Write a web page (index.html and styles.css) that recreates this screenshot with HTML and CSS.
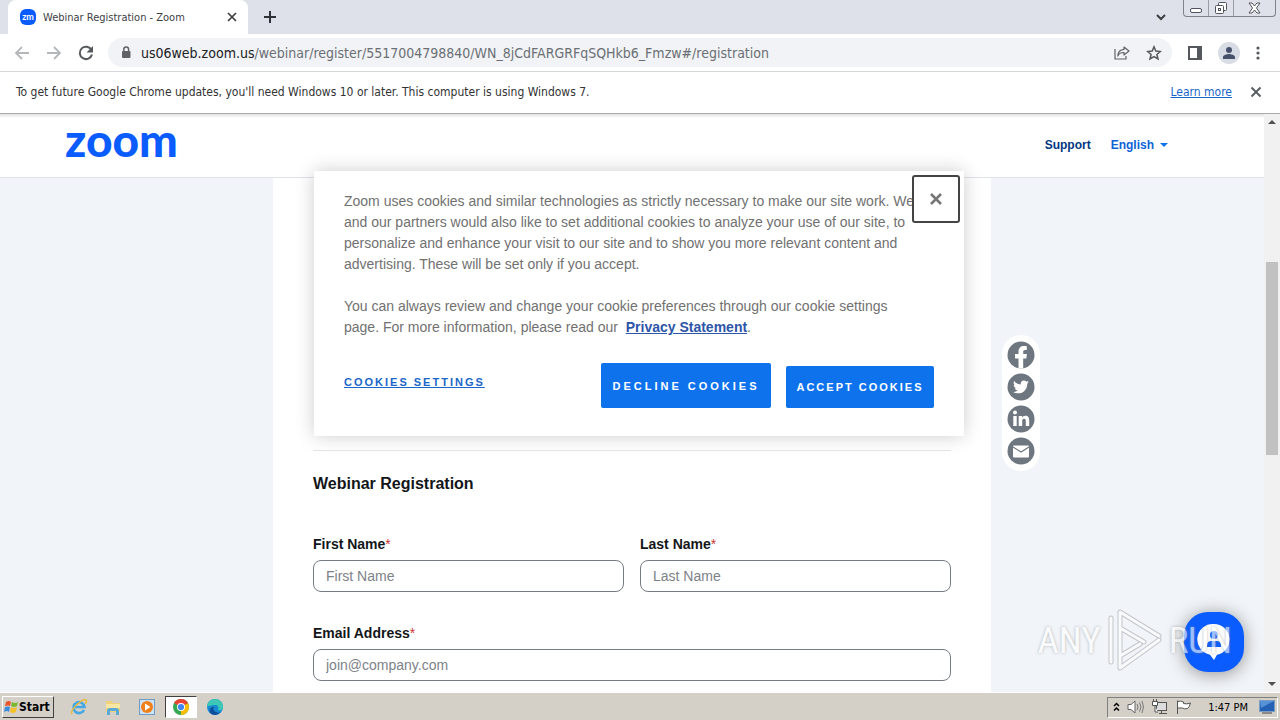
FILE: index.html
```html
<!DOCTYPE html>
<html lang="en">
<head>
  <meta charset="UTF-8">
  <meta name="viewport" content="width=device-width, initial-scale=1.0">
  <title>Webinar Registration - Zoom</title>
  <link rel="stylesheet" href="styles.css">
</head>
<body>

<!-- browser tabs -->
<div class="tab-strip">
  <div class="tab">
    <span class="favicon">zm</span>
    <span class="tab-title">Webinar Registration - Zoom</span>
    <button class="icon-btn" aria-label="Close tab">
      <svg width="10" height="10" viewBox="0 0 10 10"><path d="M1 1l8 8M9 1l-8 8" stroke="#3c4043" stroke-width="1.7"/></svg>
    </button>
  </div>
  <button class="icon-btn new-tab" aria-label="New tab">
    <svg width="12" height="12" viewBox="0 0 12 12"><path d="M6 0v12M0 6h12" stroke="#2f3237" stroke-width="2"/></svg>
  </button>
  <button class="icon-btn tab-search" aria-label="Search tabs">
    <svg width="10" height="7" viewBox="0 0 10 7"><path d="M1 1l4 4 4-4" fill="none" stroke="#3c4043" stroke-width="2"/></svg>
  </button>
  <div class="window-controls">
    <button aria-label="Minimize"><svg width="12" height="14" viewBox="0 0 12 14"><rect x=".5" y="7.500" width="11" height="4" rx="1.500" fill="#fff" stroke="#4f535c"/></svg></button>
    <button aria-label="Restore"><svg width="14" height="14" viewBox="0 0 14 14"><rect x="4.500" y="1.500" width="8" height="8" rx="1" fill="#fff" stroke="#4f535c"/><rect x="1.500" y="4.500" width="8" height="8" rx="1" fill="#fff" stroke="#4f535c"/><rect x="4.500" y="7.500" width="2" height="2" fill="#fff" stroke="#4f535c"/></svg></button>
    <button class="win-close" aria-label="Close"><svg width="13" height="12" viewBox="0 0 13 12"><path d="M1 1h3l2.500 3L9 1h3L8.500 6l3.500 5H9L6.500 8 4 11H1l3.500-5z" fill="#fff" stroke="#4f535c"/></svg></button>
  </div>
</div>

<div class="toolbar">
  <button class="icon-btn" aria-label="Back">
    <svg width="16" height="14" viewBox="0 0 16 14"><path d="M15 7H2M8 1L2 7l6 6" fill="none" stroke="#b5b8bb" stroke-width="1.800"/></svg>
  </button>
  <button class="icon-btn" aria-label="Forward">
    <svg width="16" height="14" viewBox="0 0 16 14"><path d="M1 7h13M8 1l6 6-6 6" fill="none" stroke="#b5b8bb" stroke-width="1.800"/></svg>
  </button>
  <button class="icon-btn" aria-label="Reload">
    <svg width="16" height="16" viewBox="0 0 16 16"><path d="M13.500 5A6.200 6.200 0 1 0 14 9.500" fill="none" stroke="#55585c" stroke-width="2"/><path d="M15 1v6.500H8.500z" fill="#55585c"/></svg>
  </button>
  <div class="address-bar">
    <svg width="10" height="13" viewBox="0 0 10 13"><rect x="1" y="5" width="8.500" height="7" rx="1" fill="#5f6368"/><path d="M2.800 6V3.300a2.400 2.400 0 0 1 4.800 0V6" fill="none" stroke="#5f6368" stroke-width="1.500"/></svg>
    <span class="url"><b>us06web.zoom.us</b>/webinar/register/5517004798840/WN_8jCdFARGRFqSQHkb6_Fmzw#/registration</span>
    <button class="icon-btn" aria-label="Share">
      <svg width="16" height="14" viewBox="0 0 16 14"><path d="M1 3v10h11v-3" fill="none" stroke="#5f6368" stroke-width="1.200"/><path d="M10 1l5 4-5 4V6.500C7 6.300 5 7.500 3.800 10 4 6 6.500 3.700 10 3.400z" fill="none" stroke="#5f6368" stroke-width="1.200" stroke-linejoin="round"/></svg>
    </button>
    <button class="icon-btn" aria-label="Bookmark">
      <svg width="16" height="16" viewBox="0 0 16 16"><path d="M8 1.800l1.800 4.300 4.600.4-3.500 3 1.100 4.500L8 11.600 4 14l1.100-4.500-3.500-3 4.600-.4z" fill="none" stroke="#55585c" stroke-width="1.500"/></svg>
    </button>
  </div>
  <button class="icon-btn" aria-label="Side panel">
    <svg width="14" height="14" viewBox="0 0 14 14"><rect x="1" y="1" width="12" height="12" fill="#fff" stroke="#55585c" stroke-width="2"/><path d="M9 1h4v12H9z" fill="#55585c"/></svg>
  </button>
  <button class="icon-btn" aria-label="Profile">
    <svg width="22" height="22" viewBox="0 0 22 22"><circle cx="11" cy="11" r="11" fill="#d8dce4"/><circle cx="11" cy="8" r="3" fill="#47516b"/><path d="M5 17v-2c0-2 4-3 6-3s6 1 6 3v2z" fill="#47516b"/></svg>
  </button>
  <button class="icon-btn" aria-label="Menu">
    <svg width="4" height="14" viewBox="0 0 4 14" fill="#55585c"><circle cx="2" cy="2" r="1.600"/><circle cx="2" cy="7" r="1.600"/><circle cx="2" cy="12" r="1.600"/></svg>
  </button>
</div>

<div class="infobar">
  <span>To get future Google Chrome updates, you'll need Windows 10 or later. This computer is using Windows 7.</span>
  <a href="#">Learn more</a>
  <button class="icon-btn" aria-label="Dismiss">
    <svg width="12" height="12" viewBox="0 0 12 12"><path d="M1.500 1.500l9 9M10.500 1.500l-9 9" stroke="#55585c" stroke-width="1.800"/></svg>
  </button>
</div>

<div class="viewport">
  <div class="page">
    <header class="site-header">
      <a class="logo" href="#">zoom</a>
      <nav>
        <a class="support" href="#">Support</a>
        <a class="language" href="#">English</a>
      </nav>
    </header>

    <main class="content">
      <form class="card">
        <h2>Webinar Registration</h2>
        <div class="fields">
          <div class="field">
            <label for="first-name">First Name<span>*</span></label>
            <input type="text" id="first-name" placeholder="First Name">
          </div>
          <div class="field">
            <label for="last-name">Last Name<span>*</span></label>
            <input type="text" id="last-name" placeholder="Last Name">
          </div>
          <div class="field wide">
            <label for="email">Email Address<span>*</span></label>
            <input type="email" id="email" placeholder="join@company.com">
          </div>
        </div>
      </form>
    </main>
  </div>

  <div class="scrollbar">
    <span class="arrow up"></span>
    <span class="thumb"></span>
    <span class="arrow down"></span>
  </div>

  <div class="social">
    <a href="#" aria-label="Facebook"><svg width="28" height="28" viewBox="0 0 28 28"><circle cx="14" cy="14" r="13.500" fill="#6e7680"/><path d="M11.500 27.500V17.500H8v-4.500h3.500v-2.500C11.500 7 13.800 5 17 5c1.300 0 2.800.2 2.800.2V9h-1.700c-1.500 0-1.900.9-1.900 1.900V13h3.700l-.6 4.500h-3.100v10z" fill="#fff"/></svg></a>
    <a href="#" aria-label="Twitter"><svg width="28" height="28" viewBox="0 0 28 28"><circle cx="14" cy="14" r="13.500" fill="#6e7680"/><path transform="translate(6 6) scale(.66)" d="M23.950 4.570a10 10 0 0 1-2.820.770 4.960 4.960 0 0 0 2.160-2.720c-.95.550-2 .95-3.130 1.180a4.920 4.920 0 0 0-8.380 4.480C7.690 8.090 4.070 6.130 1.640 3.160a4.820 4.820 0 0 0-.66 2.480c0 1.710.87 3.210 2.190 4.100a4.900 4.900 0 0 1-2.230-.62v.06a4.920 4.920 0 0 0 3.950 4.830 5 5 0 0 1-2.210.08 4.940 4.940 0 0 0 4.600 3.420A9.870 9.870 0 0 1 0 19.540a14 14 0 0 0 7.550 2.210c9.050 0 14-7.500 14-13.980 0-.21 0-.42-.02-.63a9.900 9.900 0 0 0 2.420-2.570z" fill="#fff"/></svg></a>
    <a href="#" aria-label="LinkedIn"><svg width="28" height="28" viewBox="0 0 28 28"><circle cx="14" cy="14" r="13.500" fill="#6e7680"/><circle cx="8" cy="7.500" r="2" fill="#fff"/><path d="M6.300 11h3.400v10H6.300zM11.700 11H15v1.400c.5-.9 1.700-1.700 3.300-1.700 3.200 0 3.900 2.100 3.900 4.900V21h-3.400v-4.700c0-1.300-.1-2.600-1.700-2.600s-1.900 1.200-1.900 2.500V21h-3.500z" fill="#fff"/></svg></a>
    <a href="#" aria-label="Email"><svg width="28" height="28" viewBox="0 0 28 28"><circle cx="14" cy="14" r="13.500" fill="#6e7680"/><rect x="6" y="8.500" width="16" height="12" rx="1" fill="#fff"/><path d="M6 10l8 5 8-5" fill="none" stroke="#6e7680" stroke-width="1.200"/></svg></a>
  </div>

  <section class="cookie-dialog" role="dialog" aria-label="Cookies">
    <p>Zoom uses cookies and similar technologies as strictly necessary to make our site work. We and our partners would also like to set additional cookies to analyze your use of our site, to personalize and enhance your visit to our site and to show you more relevant content and advertising. These will be set only if you accept.</p>
    <p>You can always review and change your cookie preferences through our cookie settings page. For more information, please read our &nbsp;<a href="#">Privacy Statement</a>.</p>
    <div class="cookie-actions">
      <button class="settings">COOKIES SETTINGS</button>
      <button class="decline">DECLINE COOKIES</button>
      <button class="accept">ACCEPT COOKIES</button>
    </div>
    <button class="dialog-close" aria-label="Close">
      <svg width="14" height="14" viewBox="0 0 14 14"><path d="M2 2l10 10M12 2L2 12" stroke="#777" stroke-width="2.600"/></svg>
    </button>
  </section>

  <button class="chat" aria-label="Chat">
    <svg width="34" height="38" viewBox="0 0 34 38"><path d="M17 1a15.500 15.500 0 0 1 3 30.700L17 37l-4-5.300A15.500 15.500 0 0 1 17 1z" fill="#fff"/><circle cx="17" cy="12" r="4" fill="#0b5cff"/><path d="M10 24v-2c0-2.500 2-4 4-4h6c2 0 4 1.500 4 4v2z" fill="#0b5cff"/></svg>
  </button>

  <div class="watermark">
    <span>ANY</span>
    <svg width="56" height="64" viewBox="0 0 56 64"><g fill="none" stroke-linejoin="round" stroke-linecap="round"><path d="M4 54V10M13 44V4l39 24M13 60V20l24 14M13 60l39-28M13 48l20-12" stroke="#a4aab1" stroke-width="5"/><path d="M4 54V10M13 44V4l39 24M13 60V20l24 14M13 60l39-28M13 48l20-12" stroke="#fff" stroke-width="3"/></g></svg>
    <span>RUN</span>
  </div>
</div>

<footer class="taskbar">
  <button class="start">
    <svg width="16" height="16" viewBox="0 0 16 16"><path d="M3 3q3-2 5 0L7 7Q5 6 2 7z" fill="#e8562a"/><path d="M9 3q3 2 6 0l-1 4q-3 2-6 0z" fill="#7cb82f"/><path d="M2 8q3-1 5 0l-1 5q-2-2-5 0z" fill="#3a8ddb"/><path d="M8 8q3 2 6 0l-1 5q-3 2-6 0z" fill="#f6c02c"/></svg>
    Start
  </button>
  <button class="task" aria-label="Internet Explorer">
    <svg width="18" height="18" viewBox="0 0 18 18"><path d="M14 12a5.500 5.500 0 1 1 .5-3H4" fill="none" stroke="#45a8e2" stroke-width="2.600"/><path d="M2 16C-1 13 12 0 16 2c1 1 0 3-1 4" fill="none" stroke="#e9b93a" stroke-width="1.400"/></svg>
  </button>
  <button class="task" aria-label="Explorer">
    <svg width="18" height="18" viewBox="0 0 18 18"><path d="M2 3h6l1 2h7v9H2z" fill="#efd27a"/><path d="M2 6h14v4H2z" fill="#f8e7a4"/><path d="M3 17v-4q0-3 3-3h6q3 0 3 3v4h-3v-4H6v4z" fill="#5da9d6"/></svg>
  </button>
  <button class="task" aria-label="Media Player">
    <svg width="18" height="18" viewBox="0 0 18 18"><rect x="1.500" y="1.500" width="15" height="15" fill="#cfe2f3" stroke="#6d9dc8"/><circle cx="9" cy="9" r="6" fill="#f08019"/><path d="M7 5.500L12.500 9 7 12.500z" fill="#fff"/></svg>
  </button>
  <button class="task active" aria-label="Chrome">
    <svg width="18" height="18" viewBox="0 0 18 18"><circle cx="9" cy="9" r="8" fill="#34a853"/><path d="M9 9L2.100 5A8 8 0 0 1 16 5.200z" fill="#ea4335"/><path d="M9 9l7-3.800A8 8 0 0 1 9 17z" fill="#fbbc04"/><circle cx="9" cy="9" r="4" fill="#fff"/><circle cx="9" cy="9" r="3.100" fill="#4285f4"/></svg>
  </button>
  <button class="task" aria-label="Edge">
    <svg width="18" height="18" viewBox="0 0 18 18"><circle cx="9" cy="9" r="8" fill="#1687d0"/><path d="M1 9a8 8 0 0 1 16 0c0 3-3 4-5 3 1-3 0-5-3-5-4 0-7 1-8 2z" fill="#3cc8b4"/><path d="M8 9c-2 3 1 6 6 5.500-3 3.500-8 3-10 0-1-3 1-6 4-5.500z" fill="#0f4f9a"/></svg>
  </button>
  <div class="tray">
    <svg width="7" height="10" viewBox="0 0 7 10"><path d="M1 4l2.500-2.500L6 4M1 8.500L3.500 6 6 8.500" fill="none" stroke="#000" stroke-width="1.500"/></svg>
    <svg width="17" height="16" viewBox="0 0 17 16"><path d="M1 5.500h3L8 2v12l-4-3.500H1z" fill="#fff" stroke="#666"/><path d="M10 5q2 3 0 6M12.500 3.500q3 4.500 0 9M15 2q3 6 0 12" fill="none" stroke="#777"/></svg>
    <svg width="17" height="16" viewBox="0 0 17 16"><rect x="5.500" y="3.500" width="10" height="8" fill="#ddd" stroke="#555"/><path d="M8 14.500h8M10.500 12v2" fill="none" stroke="#555"/><path d="M1.500 2.500h5v4h-5zM2.500 0v2M5.500 0v2M4 7v6h3" fill="#fff" stroke="#555"/></svg>
    <svg width="17" height="16" viewBox="0 0 17 16"><path d="M2.500 15V1.500M2.500 2.500q3-1 6 .5v1.500q3 1 7-.5-1 4-3 5.500-3 1-5-.5H2.500" fill="#fff" stroke="#555"/></svg>
    <time>1:47 PM</time>
    <svg width="16" height="14" viewBox="0 0 16 14"><rect x=".5" y=".5" width="15" height="11" fill="#2461b4" stroke="#7c9cc0"/><path d="M1 1h14L2 8z" fill="#5592d8"/><path d="M3 13h10" stroke="#444"/></svg>
  </div>
</footer>

</body>
</html>
```
FILE: styles.css
```css
* {
  box-sizing: border-box;
}
body {
  margin: 0;
  height: 100vh;
  display: flex;
  flex-direction: column;
  font-family: "Liberation Sans", Arial, sans-serif;
  font-size: 14px;
  background: #fff;
}
button {
  border: none;
  padding: 0;
  background: none;
  font-family: inherit;
  cursor: pointer;
}
svg {
  display: block;
  flex: none;
}

/* browser */
.tab-strip, .toolbar, .infobar {
  flex: none;
  font-family: "DejaVu Sans Condensed", Tahoma, sans-serif;
}
.tab-strip {
  height: 34px;
  display: flex;
  align-items: center;
  padding: 0 4px 0 8px;
  background: #dee1e9;
}
.tab {
  align-self: stretch;
  width: 240px;
  display: flex;
  align-items: center;
  padding: 0 11px 0 12px;
  background: #fff;
  border-radius: 8px 8px 0 0;
  font-size: 11px;
  color: #3c4043;
}
.favicon {
  width: 16px;
  height: 16px;
  margin-right: 7px;
  border-radius: 6px;
  background: #0b5cff;
  color: #fff;
  font: bold 9px/15px Lato, sans-serif;
  text-align: center;
}
.tab-title {
  flex: 1;
}
.new-tab {
  margin-left: 16px;
}
.tab-search {
  margin-left: auto;
  margin-right: 17px;
}
.window-controls {
  align-self: flex-start;
  display: flex;
  height: 17px;
  border: 1px solid #7e828b;
  border-top: none;
  border-radius: 0 0 4px 4px;
}
.window-controls button {
  width: 25px;
  display: flex;
  align-items: center;
  justify-content: center;
  border-right: 1px solid #9a9da5;
}
.window-controls .win-close {
  width: 41px;
  border-right: none;
}
.toolbar {
  height: 38px;
  display: flex;
  align-items: center;
  gap: 16px;
  padding: 0 20px 0 14px;
  border-bottom: 1px solid #d5d7da;
}
.address-bar {
  flex: 1;
  height: 29px;
  display: flex;
  align-items: center;
  gap: 16px;
  margin-left: -2px;
  padding: 0 10px 0 13px;
  border-radius: 15px;
  background: #f1f3f6;
}
.url {
  flex: 1;
  margin-left: -6px;
  font-size: 14px;
  color: #6b6f74;
  white-space: nowrap;
}
.url b {
  font-weight: normal;
  color: #202124;
}
.infobar {
  height: 42px;
  display: flex;
  align-items: center;
  padding: 0 18px 2px 16px;
  border-bottom: 1px solid #aaa;
  font-size: 12px;
  color: #333;
}
.infobar span {
  flex: 1;
}
.infobar a {
  margin-right: 18px;
  color: #1a66c9;
}

/* web page */
.viewport {
  flex: 1;
  min-height: 0;
  position: relative;
  display: flex;
  overflow: hidden;
}
.page {
  flex: 1;
  display: flex;
  flex-direction: column;
}
.site-header {
  flex: none;
  height: 64px;
  display: flex;
  align-items: center;
  justify-content: space-between;
  padding: 0 96px 2px 65px;
  border-bottom: 1px solid #dfe3e8;
  background: linear-gradient(#e0e0e0, #fff 4px);
}
.logo {
  color: #0b5cff;
  font: 900 46px/52px Lato, sans-serif;
  text-decoration: none;
  padding-bottom: 10px;
}
nav {
  display: flex;
  gap: 20px;
  font-size: 12px;
  font-weight: bold;
}
nav a {
  text-decoration: none;
}
.support {
  color: #00377f;
}
.language {
  display: flex;
  align-items: center;
  gap: 6px;
  color: #0e63d8;
}
.language::after {
  content: "";
  border: 4px solid transparent;
  border-top-color: #0e72ed;
  border-bottom: none;
}
.content {
  flex: 1;
  background: #f1f4f8;
}
.card {
  max-width: 718px;
  height: 100%;
  margin: 0 auto;
  padding: 272px 40px 0;
  background: #fff;
}
.card h2 {
  margin: 0;
  padding: 23px 0 40px;
  border-top: 1px solid #e4e7ea;
  font-size: 16px;
  line-height: 20px;
  color: #131619;
}
.fields {
  display: grid;
  grid-template-columns: 1fr 1fr;
  gap: 31px 16px;
}
.wide {
  grid-column: 1 / -1;
}
.field label {
  display: block;
  margin-bottom: 6px;
  font-size: 14px;
  line-height: 20px;
  font-weight: bold;
  color: #131619;
}
.field label span {
  color: #c33;
  font-weight: normal;
}
.field input {
  display: block;
  width: 100%;
  height: 32px;
  padding: 0 12px;
  border: 1px solid #777c82;
  border-radius: 8px;
  font: 14px "Liberation Sans", Arial, sans-serif;
}
.field input::placeholder {
  color: #7d8288;
}
.scrollbar {
  width: 16px;
  flex: none;
  display: flex;
  flex-direction: column;
  align-items: center;
  padding: 6px 2px;
  background: #f1f1f1;
}
.arrow {
  border: 4px solid transparent;
}
.arrow.up {
  border-bottom-color: #505050;
  border-top: none;
}
.arrow.down {
  margin-top: auto;
  border-top-color: #505050;
  border-bottom: none;
}
.thumb {
  width: 12px;
  height: 193px;
  margin-top: 138px;
  background: #c1c1c1;
}
.social {
  position: absolute;
  top: 221px;
  right: 240px;
  display: grid;
  gap: 4px;
  padding: 6px 5px;
  border-radius: 20px;
  background: #fff;
}
.chat {
  position: absolute;
  right: 36px;
  bottom: 20px;
  width: 60px;
  height: 60px;
  display: grid;
  place-items: center;
  border-radius: 24px;
  background: #0b5cff;
  box-shadow: 0 2px 18px rgba(0, 0, 0, 0.4);
}
.watermark {
  position: absolute;
  right: 48px;
  bottom: 20px;
  display: flex;
  align-items: center;
  gap: 6px;
  opacity: 0.6;
  color: #fff;
  font: 37px "Liberation Sans Narrow", "Roboto Condensed", sans-serif;
  text-shadow: 0 0 3px #888;
  pointer-events: none;
}

/* cookie dialog */
.cookie-dialog {
  position: absolute;
  top: 57px;
  left: 50%;
  width: 650px;
  margin-left: -326px;
  padding: 20px 30px 28px;
  background: #fff;
  box-shadow: 0 0 18px rgba(0, 0, 0, 0.2);
  color: #717171;
}
.cookie-dialog p {
  max-width: 576px;
  margin: 0 0 21px;
  font-size: 14px;
  line-height: 21px;
}
.cookie-dialog p a {
  color: #2d55a8;
  font-weight: bold;
}
.cookie-actions {
  display: flex;
  align-items: flex-end;
  margin-top: 25px;
}
.cookie-actions button {
  font-size: 11px;
  font-weight: bold;
}
.cookie-actions .settings {
  margin-right: auto;
  align-self: center;
  padding-bottom: 7px;
  color: #1a66c9;
  letter-spacing: 2px;
  text-decoration: underline;
}
.cookie-actions .decline,
.cookie-actions .accept {
  border-radius: 2px;
  background: #0e72ed;
  color: #fff;
}
.cookie-actions .decline {
  width: 170px;
  height: 45px;
  letter-spacing: 3px;
}
.cookie-actions .accept {
  width: 148px;
  height: 42px;
  margin-left: 15px;
  letter-spacing: 2px;
}
.dialog-close {
  position: absolute;
  top: 4px;
  right: 4px;
  width: 48px;
  height: 48px;
  display: grid;
  place-items: center;
  border: 2px solid #444;
  border-radius: 3px;
}

/* taskbar */
.taskbar {
  flex: none;
  height: 28px;
  display: flex;
  align-items: center;
  padding: 2px 2px 1px;
  background: #d4d0c8;
  border-top: 1px solid #fff;
  font-family: "DejaVu Sans Condensed", Tahoma, sans-serif;
}
.start {
  height: 22px;
  display: flex;
  align-items: center;
  padding: 0 3px 0 0;
  margin-right: 9px;
  border: 1px solid;
  border-color: #fff #404040 #404040 #fff;
  font-size: 12px;
  font-weight: bold;
}
.task {
  width: 32px;
  height: 22px;
  margin-right: 2px;
  display: grid;
  place-items: center;
}
.task.active {
  background: #fff;
  border: 1px solid;
  border-color: #404040 #fff #fff #404040;
}
.tray {
  height: 21px;
  margin-left: auto;
  display: flex;
  align-items: center;
  gap: 7px;
  padding: 0 2px 0 5px;
  border: 1px solid;
  border-color: #808080 #fff #fff #808080;
  font-size: 11px;
}
.tray time {
  margin: 0 4px 0 9px;
}
```
